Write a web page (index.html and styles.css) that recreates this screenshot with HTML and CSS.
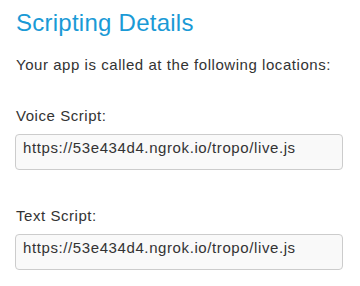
FILE: index.html
```html
<!DOCTYPE html>
<html lang="en">
<head>
<meta charset="utf-8">
<title>Scripting Details</title>
<link rel="stylesheet" href="styles.css">
</head>
<body>
<section class="panel">
  <h1 class="title">Scripting Details</h1>
  <p class="intro">Your app is called at the following locations:</p>
  <div class="field">
    <label class="field-label">Voice Script:</label>
    <div class="field-box">https://53e434d4.ngrok.io/tropo/live.js</div>
  </div>
  <div class="field">
    <label class="field-label">Text Script:</label>
    <div class="field-box">https://53e434d4.ngrok.io/tropo/live.js</div>
  </div>
</section>
</body>
</html>
```

FILE: styles.css
```css
html, body {
  margin: 0;
  padding: 0;
  background: #ffffff;
}

body {
  font-family: "Liberation Sans", Arial, sans-serif;
  color: #333333;
}

.panel {
  display: flex;
  flex-direction: column;
  padding: 9px 17px 0 15px;
}

.title {
  margin: 0 0 0 1px;
  font-size: 24px;
  line-height: 28px;
  font-weight: normal;
  letter-spacing: 0.25px;
  color: #1a9ad6;
}

.intro {
  margin: 18px 0 0 1px;
  font-size: 15px;
  line-height: 20px;
  letter-spacing: 0.55px;
}

.field {
  display: flex;
  flex-direction: column;
  margin-top: 31px;
}

.field + .field {
  margin-top: 36px;
}

.field-label {
  margin-left: 1px;
  font-size: 15px;
  line-height: 20px;
  letter-spacing: 0.55px;
}

.field-box {
  margin-top: 8px;
  box-sizing: border-box;
  height: 36px;
  padding: 3px 8px 0 7px;
  font-size: 15px;
  line-height: 20px;
  letter-spacing: 0.6px;
  color: #333333;
  background: #f9f9f9;
  border: 1px solid #cccccc;
  border-radius: 4px;
}
```
